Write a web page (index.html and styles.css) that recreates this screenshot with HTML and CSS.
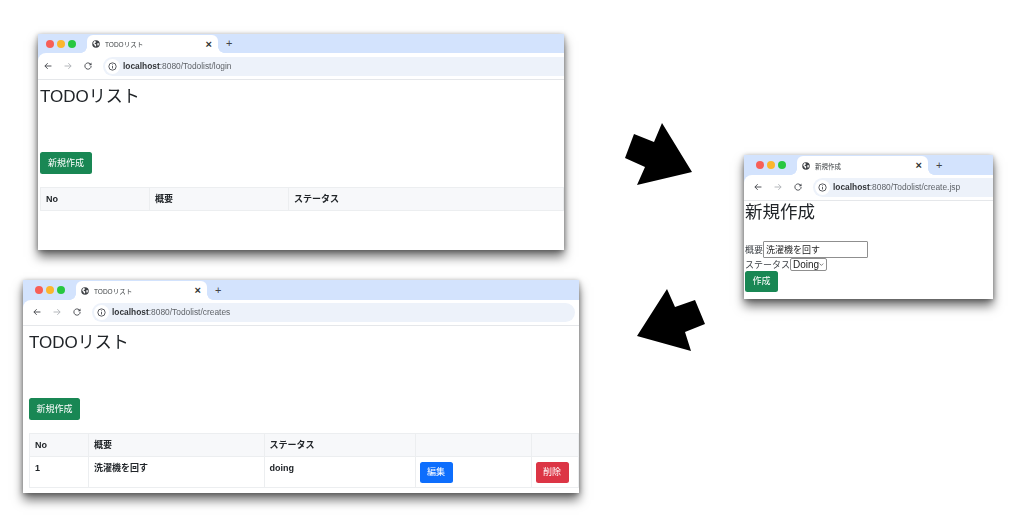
FILE: index.html
```html
<!DOCTYPE html>
<html lang="ja">
<head>
<meta charset="utf-8">
<title>TODOリスト</title>
<link rel="stylesheet" href="styles.css">
</head>
<body>
<svg width="0" height="0" class="defs">
  <defs>
    <symbol id="globe" viewBox="0 0 16 16"><circle cx="8" cy="8" r="7.5" fill="#3f4246"/><path d="M5 2.2c2 .4 3.5 1 3 2.3-.4 1-2 .8-2.600 2-.5 1 1 1.800 2.300 2 1 .2 1 1.500.5 2.500-.4.800-.6 1.500-.9 2.300-1.500-.7-2.400-2.300-2.700-3.800-.2-1-1.700-1.500-2.300-2.500.2-2 1.300-3.700 2.700-4.800zM10.500 7c1.200-.5 2.600-.6 3.500 0 0 2-.8 3.700-2.300 5-.6-1-.3-2-.9-3-.4-.7-.8-1.500-.3-2z" fill="#fff"/></symbol>
    <symbol id="back" viewBox="0 0 16 16"><path d="M13.500 8H3M7.500 3.500 3 8l4.500 4.500" fill="none" stroke="currentColor" stroke-width="1.500"/></symbol>
    <symbol id="forward" viewBox="0 0 16 16"><path d="M2.500 8H13M8.500 3.500 13 8l-4.500 4.500" fill="none" stroke="currentColor" stroke-width="1.500"/></symbol>
    <symbol id="reload" viewBox="0 0 16 16"><path d="M13 8a5 5 0 1 1-1.500-3.500L13 6" fill="none" stroke="currentColor" stroke-width="1.500"/><path d="M13.500 2.500v4.200H9.300z" fill="currentColor"/></symbol>
    <symbol id="info" viewBox="0 0 16 16"><circle cx="8" cy="8" r="6.500" fill="none" stroke="currentColor" stroke-width="1.600"/><path d="M8 7v4.500M8 4.300v1.400" stroke="currentColor" stroke-width="1.600"/></symbol>
  </defs>
</svg>

<section class="window window-login">
  <div class="tabbar">
    <span class="lights"><i class="light red"></i><i class="light amber"></i><i class="light green"></i></span>
    <div class="tab"><svg class="globe"><use href="#globe"/></svg><span class="tab-title">TODOリスト</span><span class="tab-close">×</span></div>
    <span class="tab-new">+</span>
  </div>
  <div class="toolbar">
    <svg class="nav"><use href="#back"/></svg><svg class="nav dim"><use href="#forward"/></svg><svg class="nav"><use href="#reload"/></svg>
    <div class="address"><span class="info"><svg><use href="#info"/></svg></span><span class="url"><b>localhost</b>:8080/Todolist/login</span></div>
  </div>
  <div class="page">
    <h1 class="title">TODOリスト</h1>
    <a class="btn btn-green btn-new">新規作成</a>
    <table class="table table-login">
      <thead><tr><th class="c-no">No</th><th class="c-sum">概要</th><th>ステータス</th></tr></thead>
    </table>
  </div>
</section>

<section class="window window-create">
  <div class="tabbar">
    <span class="lights"><i class="light red"></i><i class="light amber"></i><i class="light green"></i></span>
    <div class="tab"><svg class="globe"><use href="#globe"/></svg><span class="tab-title">新規作成</span><span class="tab-close">×</span></div>
    <span class="tab-new">+</span>
  </div>
  <div class="toolbar">
    <svg class="nav"><use href="#back"/></svg><svg class="nav dim"><use href="#forward"/></svg><svg class="nav"><use href="#reload"/></svg>
    <div class="address"><span class="info"><svg><use href="#info"/></svg></span><span class="url"><b>localhost</b>:8080/Todolist/create.jsp</span></div>
  </div>
  <div class="page">
    <h1 class="title">新規作成</h1>
    <div class="form">
      <div class="field"><label>概要</label><input class="text-input" type="text" value="洗濯機を回す"></div>
      <div class="field"><label>ステータス</label><span class="select">Doing<svg viewBox="0 0 8 8"><path d="M1 2.500 4 5.500 7 2.500" fill="none" stroke="#333" stroke-width="1"/></svg></span></div>
      <a class="btn btn-green btn-make">作成</a>
    </div>
  </div>
</section>

<section class="window window-list">
  <div class="tabbar">
    <span class="lights"><i class="light red"></i><i class="light amber"></i><i class="light green"></i></span>
    <div class="tab"><svg class="globe"><use href="#globe"/></svg><span class="tab-title">TODOリスト</span><span class="tab-close">×</span></div>
    <span class="tab-new">+</span>
  </div>
  <div class="toolbar">
    <svg class="nav"><use href="#back"/></svg><svg class="nav dim"><use href="#forward"/></svg><svg class="nav"><use href="#reload"/></svg>
    <div class="address"><span class="info"><svg><use href="#info"/></svg></span><span class="url"><b>localhost</b>:8080/Todolist/creates</span></div>
  </div>
  <div class="page">
    <h1 class="title">TODOリスト</h1>
    <a class="btn btn-green btn-new">新規作成</a>
    <table class="table table-list">
      <thead><tr><th class="l-no">No</th><th class="l-sum">概要</th><th class="l-st">ステータス</th><th class="l-ed"></th><th></th></tr></thead>
      <tbody><tr><td>1</td><td>洗濯機を回す</td><td>doing</td><td><a class="btn btn-blue">編集</a></td><td><a class="btn btn-red">削除</a></td></tr></tbody>
    </table>
  </div>
</section>

<svg class="arrow arrow-right" viewBox="0 0 68 63"><path d="M9 11 29 19 37 0 67 49 12 62 20 44 0 35Z"/></svg>
<svg class="arrow arrow-left" viewBox="0 0 68 63"><path d="M30 0 38 18 58 11 68 35 48 43 54 62 0 47Z"/></svg>
</body>
</html>
```

FILE: styles.css
```css
* { box-sizing: border-box; }
html, body { margin: 0; padding: 0; }
body {
  position: relative;
  width: 1024px;
  height: 521px;
  overflow: hidden;
  background: #fff;
  font-family: "Liberation Sans", "Noto Sans CJK JP", sans-serif;
  color: #212529;
}
.defs { position: absolute; }

.window {
  position: absolute;
  display: flex;
  flex-direction: column;
  background: #d3e3fd;
  box-shadow: 0 7px 10px rgba(0, 0, 0, .55), 0 1px 5px rgba(0, 0, 0, .35);
}
.window-login { left: 38px; top: 34px; width: 526px; height: 216px; }
.window-create { left: 744px; top: 155px; width: 249px; height: 144px; }
.window-list { left: 23px; top: 280px; width: 556px; height: 213px; }

.tabbar {
  display: flex;
  align-items: flex-end;
  height: 20px;
  flex: none;
}
.lights { display: flex; gap: 3px; width: 53px; padding-left: 12px; align-self: center; }
.light { width: 8px; height: 8px; border-radius: 50%; }
.red { background: #f75f57; }
.amber { background: #fbb62e; }
.green { background: #28c840; }
.tab {
  position: relative;
  display: flex;
  align-items: center;
  width: 131px;
  height: 19px;
  padding: 0 6px 0 5px;
  background: #fff;
  border-radius: 6px 6px 0 0;
}
.tab::before, .tab::after {
  content: "";
  position: absolute;
  bottom: 0;
  width: 6px;
  height: 6px;
}
.tab::before { left: -6px; background: radial-gradient(circle at 0 0, transparent 5.500px, #fff 6px); }
.tab::after { right: -6px; background: radial-gradient(circle at 100% 0, transparent 5.500px, #fff 6px); }
.globe { width: 8px; height: 8px; flex: none; filter: blur(.2px); }
.tab-title { flex: 1; margin-left: 5px; font-size: 6.500px; color: #3c4043; white-space: nowrap; filter: blur(.3px); }
.tab-close { font-size: 11px; line-height: 1; color: #333; font-weight: 700; }
.tab-new { align-self: center; margin-left: 8px; font-size: 11px; line-height: 1; color: #444; }

.toolbar {
  display: flex;
  align-items: center;
  flex: none;
  height: 26px;
  padding: 0 0 1px 9px;
  gap: 10px;
  background: #fff;
  border-radius: 8px 0 0 0;
  border-bottom: 1px solid #e5e7ea;
  color: #474a4f;
}
.nav { width: 10px; height: 10px; flex: none; }
.dim { color: #b0b3b7; }
.address {
  display: flex;
  align-items: center;
  flex: 1;
  height: 19px;
  min-width: 0;
  border-radius: 10px 0 0 10px;
  background: #edf2fa;
}
.info {
  display: flex;
  align-items: center;
  justify-content: center;
  width: 15px;
  height: 15px;
  margin-left: 2px;
  border-radius: 50%;
  background: #fff;
}
.info svg { width: 9px; height: 9px; }
.url { margin-left: 3px; font-size: 8.400px; color: #5f6368; white-space: nowrap; filter: blur(.3px); }
.url b { color: #33363a; }

.page { flex: 1; min-height: 0; background: #fff; filter: blur(.35px); }
.title { margin: 0 0 38px; font-size: 17px; font-weight: 400; line-height: 34px; }

.btn {
  display: inline-block;
  height: 22px;
  padding: 0 7px;
  border-radius: 2.500px;
  color: #fff;
  font-size: 9px;
  font-weight: 400;
  line-height: 22px;
  text-align: center;
}
.btn-green { background: #198754; }
.btn-blue { background: #0d6efd; }
.btn-red { background: #dc3545; }

.table {
  table-layout: fixed;
  border-collapse: collapse;
  font-size: 9px;
  font-weight: 700;
  line-height: 12px;
}
.table th, .table td { border: 1px solid #eceef0; padding: 0 5px; text-align: left; }
.table th { height: 23px; background: #f7f8fa; vertical-align: middle; }
.table td { height: 31px; padding-top: 5px; vertical-align: top; }

/* login window has a narrower left inset than the other two */
.window-login .tabbar { height: 19px; }
.window-login .lights { width: 49px; padding-left: 8px; }
.window-login .tab { height: 18px; }
.window-login .toolbar { height: 27px; padding: 0 0 0 5px; }
.window-login .page { padding-left: 2px; }
.window-login .btn-new { width: 52px; display: block; }
.table-login { width: 524px; margin-top: 13px; }
.c-no { width: 109px; }
.c-sum { width: 139px; }

.window-list .address { margin-right: 4px; border-radius: 10px; }
.window-list .page { padding-left: 6px; }
.window-list .btn-new { width: 51px; display: block; }
.table-list { width: 550px; margin-top: 13px; }
.table-list td .btn { display: block; width: 33px; height: 21px; margin-left: -1px; line-height: 21px; padding: 0; }
.l-no { width: 59px; }
.l-sum { width: 175.500px; }
.l-st { width: 151px; }
.l-ed { width: 116px; }

.window-create .page { padding-left: 1px; }
.window-create .title { font-size: 17.500px; line-height: 22px; margin-bottom: 18px; }
.form { display: flex; flex-direction: column; align-items: flex-start; font-size: 9px; color: #3a3f44; }
.field { display: flex; align-items: center; }
.text-input {
  width: 105px;
  height: 17px;
  padding: 0 2px;
  border: 1px solid #8f8f8f;
  border-radius: 1px;
  font: 9px "Liberation Sans", "Noto Sans CJK JP", sans-serif;
  color: #222;
}
.select {
  display: flex;
  align-items: center;
  justify-content: space-between;
  width: 37px;
  height: 13px;
  padding: 0 2px;
  border: 1px solid #8f8f8f;
  border-radius: 2px;
  font-size: 10px;
  color: #222;
}
.select svg { width: 5px; height: 5px; }
.btn-make { width: 33px; height: 21px; line-height: 21px; }

.arrow { position: absolute; fill: #000; }
.arrow-right { left: 625px; top: 123px; width: 68px; height: 63px; }
.arrow-left { left: 637px; top: 289px; width: 68px; height: 63px; }
```
